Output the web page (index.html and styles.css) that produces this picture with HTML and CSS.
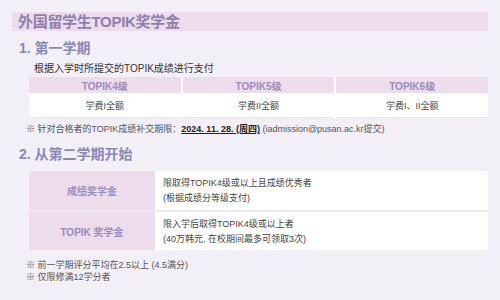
FILE: index.html
```html
<!DOCTYPE html>
<html lang="zh">
<head>
<meta charset="utf-8">
<link rel="stylesheet" href="styles.css">
</head>
<body>
<div class="page">
  <h1 class="title">外国留学生TOPIK奖学金</h1>
  <h2 class="section">1. 第一学期</h2>
  <p class="lead">根据入学时所提交的TOPIK成绩进行支付</p>
  <div class="grid3">
    <div class="th">TOPIK4级</div>
    <div class="th">TOPIK5级</div>
    <div class="th">TOPIK6级</div>
    <div class="td">学费I全额</div>
    <div class="td">学费II全额</div>
    <div class="td">学费I、II全额</div>
  </div>
  <p class="note">※ 针对合格者的TOPIK成绩补交期限：<b class="date">2024. 11. 28. (周四)</b> (iadmission@pusan.ac.kr提交)</p>
  <h2 class="section s2">2. 从第二学期开始</h2>
  <div class="grid2">
    <div class="lh">成绩奖学金</div>
    <div class="rd"><span>限取得TOPIK4级或以上且成绩优秀者</span><span>(根据成绩分等级支付)</span></div>
    <div class="lh">TOPIK 奖学金</div>
    <div class="rd"><span>限入学后取得TOPIK4级或以上者</span><span>(40万韩元, 在校期间最多可领取3次)</span></div>
  </div>
  <div class="notes">
    <p class="note2">※ 前一学期评分平均在2.5以上 (4.5满分)</p>
    <p class="note2">※ 仅限修满12学分者</p>
  </div>
</div>
</body>
</html>
```
FILE: styles.css
```css
html, body {
  margin: 0;
  padding: 0;
  background: #f2eff6;
}
body {
  font-family: "Liberation Sans", "Noto Sans CJK SC", sans-serif;
  color: #333;
  width: 500px;
  height: 300px;
  overflow: hidden;
}
.page {
  padding: 12px 12px 0 12px;
}
.title {
  margin: 0;
  height: 19px;
  line-height: 19px;
  padding-left: 6px;
  background: #eddcec;
  color: #8d80ad;
  font-size: 15px;
  font-weight: bold;
  letter-spacing: -0.3px;
}
.section {
  margin: 8px 0 0 7px;
  font-size: 14px;
  line-height: 18px;
  font-weight: bold;
  color: #8a88b6;
}
.s2 {
  margin-top: 10px;
}
.lead {
  margin: 5px 0 0 22px;
  font-size: 10px;
  line-height: 13px;
  color: #333;
}
.grid3 {
  margin: 2px 0 0 17px;
  display: grid;
  grid-template-columns: 1fr 1fr 1fr;
  grid-template-rows: 16px 25px;
  column-gap: 2px;
  row-gap: 0;
  background: #fff;
}
.th {
  background: #eddcec;
  color: #9b8dba;
  font-weight: bold;
  font-size: 10px;
  display: flex;
  align-items: center;
  justify-content: center;
}
.td {
  background: #fff;
  font-size: 9px;
  color: #444;
  display: flex;
  align-items: center;
  justify-content: center;
  border-bottom: 1px solid #ece6ef;
}
.note {
  margin: 5px 0 0 14px;
  font-size: 9px;
  line-height: 12px;
  color: #555;
}
.date {
  color: #222;
  text-decoration: underline;
}
.grid2 {
  margin: 8px 0 0 17px;
  display: grid;
  grid-template-columns: 126px 1fr;
  grid-template-rows: 39px 38px;
  row-gap: 2px;
  background: #efe8f1;
}
.lh {
  background: #eddcec;
  color: #9b8dba;
  font-size: 10px;
  font-weight: bold;
  display: flex;
  align-items: center;
  justify-content: center;
}
.rd {
  background: #fff;
  display: flex;
  flex-direction: column;
  justify-content: center;
  gap: 3px;
  padding-left: 8px;
  font-size: 9px;
  line-height: 12px;
  color: #444;
}
.notes {
  margin: 9px 0 0 14px;
}
.note2 {
  margin: 0;
  font-size: 9px;
  line-height: 12px;
  color: #555;
}
```
